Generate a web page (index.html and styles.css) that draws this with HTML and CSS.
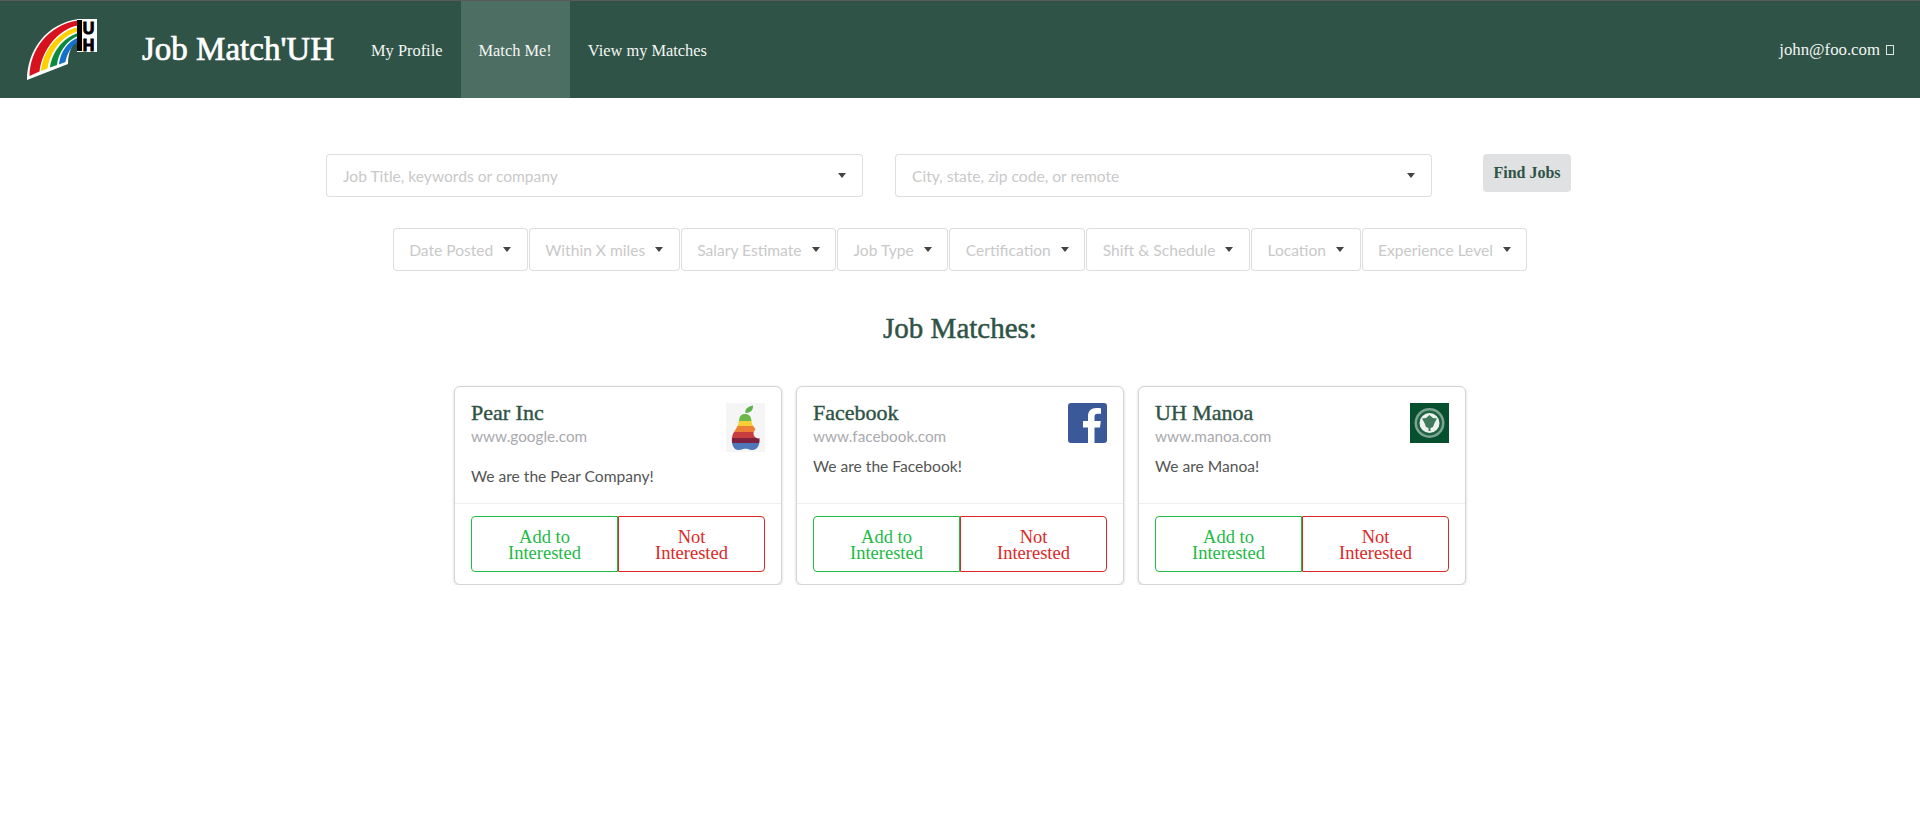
FILE: index.html
```html
<!DOCTYPE html>
<html lang="en">
<head>
<meta charset="utf-8">
<title>Job Match'UH</title>
<link rel="stylesheet" href="styles.css">
</head>
<body>
<nav class="navbar">
  <svg class="logo" viewBox="0 0 100 64" width="100" height="64" aria-hidden="true">
    <path d="M27 61 C27 32 46 4 79 0 L79 20 C72 24 68 34 68 45 Z" fill="#fff"/>
    <path d="M29.500 57 C30 31 48 6 78 1.500 L78 6.500 C58 10 42 31 39.500 52.500 Z" fill="#d5121e"/>
    <path d="M41 52 C43 31 58 13 78 8 L78 12.500 C62 16 50 33 47.500 49.500 Z" fill="#fdd000"/>
    <path d="M50 48.500 C52 33 63 19 78 14 L78 17 C67 21 58 34 57 46 Z" fill="#0a8a3c"/>
    <path d="M59 45.500 C60 34 67 23 78 18.500 L78 23 C72 26 66.500 35 65.500 43 Z" fill="#1470c8"/>
    <rect x="77" y="0" width="20" height="33" fill="#fff"/>
    <rect x="77" y="1" width="5" height="31" fill="#000"/>
    <text class="logo-letter" x="88.500" y="1">UH</text>
  </svg>
  <a class="brand" href="#">Job Match'UH</a>
  <a class="nav-item" href="#">My Profile</a>
  <a class="nav-item active" href="#">Match Me!</a>
  <a class="nav-item" href="#">View my Matches</a>
  <span class="nav-user">john@foo.com <i class="tofu"></i></span>
</nav>

<main class="page">
  <section class="search-row">
    <div class="select select-wide"><span>Job Title, keywords or company</span><i class="caret"></i></div>
    <div class="select select-wide"><span>City, state, zip code, or remote</span><i class="caret"></i></div>
    <button class="find-btn" type="button">Find Jobs</button>
  </section>

  <section class="filter-row">
    <div class="select filter"><span>Date Posted</span><i class="caret"></i></div>
    <div class="select filter"><span>Within X miles</span><i class="caret"></i></div>
    <div class="select filter"><span>Salary Estimate</span><i class="caret"></i></div>
    <div class="select filter"><span>Job Type</span><i class="caret"></i></div>
    <div class="select filter"><span>Certification</span><i class="caret"></i></div>
    <div class="select filter"><span>Shift &amp; Schedule</span><i class="caret"></i></div>
    <div class="select filter"><span>Location</span><i class="caret"></i></div>
    <div class="select filter"><span>Experience Level</span><i class="caret"></i></div>
  </section>

  <h1 class="matches-title">Job Matches:</h1>

  <section class="cards">
    <article class="card">
      <div class="card-body">
        <svg class="card-logo" viewBox="0 0 39 49" width="39" height="49" aria-hidden="true">
          <defs>
            <clipPath id="pear-shape">
              <path d="M19 11 C23 11 25 13 25.500 18 C26 23 30 26 32 30 C34.500 35 34 42 31 45 C28 48 24 47 22 46 C20.500 45.500 18.500 45.500 17 46 C13 47.500 9 47.500 7.500 44 C5 40 5.500 33 8 29 C10.500 25 12.500 22 13 18 C13.500 13 15 11 19 11 Z"/>
            </clipPath>
          </defs>
          <rect width="39" height="49" fill="#f5f5f5"/>
          <path d="M19.500 10 C18.500 6 22 3.500 27 2.500 C27.500 7 24.500 10 19.500 10 Z" fill="#5cb24a"/>
          <g clip-path="url(#pear-shape)">
            <rect x="0" y="10" width="39" height="8" fill="#6cb84b"/>
            <rect x="0" y="18" width="39" height="5" fill="#f8cf36"/>
            <rect x="0" y="23" width="39" height="6" fill="#ee7f36"/>
            <rect x="0" y="29" width="39" height="6" fill="#c73c3c"/>
            <rect x="0" y="35" width="39" height="5" fill="#7e2140"/>
            <rect x="0" y="40" width="39" height="8" fill="#4e76b8"/>
          </g>
          <circle cx="32.500" cy="30.500" r="5" fill="#f5f5f5"/>
        </svg>
        <h2 class="card-title">Pear Inc</h2>
        <div class="card-meta">www.google.com</div>
        <p class="card-desc card-desc-tall">We are the Pear Company!</p>
      </div>
      <div class="card-actions">
        <button class="action action-add" type="button">Add to Interested</button>
        <button class="action action-not" type="button">Not Interested</button>
      </div>
    </article>

    <article class="card">
      <div class="card-body">
        <svg class="card-logo" viewBox="0 0 39 40" width="39" height="40" aria-hidden="true">
          <rect width="39" height="40" rx="3" fill="#3b5998"/>
          <path d="M26.500 40 V24.500 H32 L32.800 18 H26.500 V14 C26.500 12 27.200 10.800 29.800 10.800 H33 V5.200 C32.300 5.100 30.500 5 28.200 5 C23.400 5 20 7.800 20 13.200 V18 H15 V24.500 H20 V40 Z" fill="#fff"/>
        </svg>
        <h2 class="card-title">Facebook</h2>
        <div class="card-meta">www.facebook.com</div>
        <p class="card-desc">We are the Facebook!</p>
      </div>
      <div class="card-actions">
        <button class="action action-add" type="button">Add to Interested</button>
        <button class="action action-not" type="button">Not Interested</button>
      </div>
    </article>

    <article class="card">
      <div class="card-body">
        <svg class="card-logo" viewBox="0 0 39 40" width="39" height="40" aria-hidden="true">
          <rect width="39" height="40" fill="#07502f"/>
          <circle cx="19.500" cy="20" r="15" fill="#7fa391"/>
          <circle cx="19.500" cy="20" r="12.500" fill="#1f6342"/>
          <circle cx="19.500" cy="20" r="10" fill="#eef2ee"/>
          <path d="M19.500 12 L23 15 L27 15.500 L24.500 20 L23 24 L20.500 25 L20.500 28 L18.500 28 L18.500 25 L16 24 L14.500 20 L12 15.500 L16 15 Z" fill="#3f7a5c"/>
        </svg>
        <h2 class="card-title">UH Manoa</h2>
        <div class="card-meta">www.manoa.com</div>
        <p class="card-desc">We are Manoa!</p>
      </div>
      <div class="card-actions">
        <button class="action action-add" type="button">Add to Interested</button>
        <button class="action action-not" type="button">Not Interested</button>
      </div>
    </article>
  </section>
</main>
</body>
</html>
```
FILE: styles.css
```css
* { box-sizing: border-box; }

html, body { margin: 0; padding: 0; background: #fff; }

body {
  font-family: Lato, "Open Sans", sans-serif;
  font-size: 15.6px;
  color: #444;
}

.navbar {
  display: flex;
  align-items: stretch;
  height: 98px;
  background: #2f5346;
  border-top: 1px solid #5a5a5a;
  font-family: "Liberation Serif", serif;
}

.logo { margin-top: 18px; flex: none; align-self: flex-start; overflow: visible; }

.logo-letter {
  font-family: "Liberation Sans", sans-serif;
  font-weight: 700;
  font-size: 16px;
  writing-mode: vertical-rl;
  text-orientation: upright;
  fill: #000;
  stroke: #000;
  stroke-width: 1px;
}

.brand {
  display: flex;
  align-items: center;
  margin-left: 42px;
  margin-right: 19px;
  font-size: 33px;
  color: #fff;
  text-decoration: none;
  white-space: nowrap;
  -webkit-text-stroke: 0.7px #fff;
}

.nav-item {
  display: flex;
  align-items: center;
  padding: 2px 18px 0;
  font-size: 16.4px;
  color: #f3f6f4;
  text-decoration: none;
  white-space: nowrap;
}

.nav-item.active { background: #4d6e62; }

.nav-user {
  display: flex;
  align-items: center;
  gap: 6px;
  margin-left: auto;
  padding-right: 26px;
  font-size: 16.8px;
  color: #f3f6f4;
  white-space: nowrap;
}

.tofu {
  display: inline-block;
  width: 8px;
  height: 10px;
  border: 1px solid #dfe5e2;
}

.page {
  display: flex;
  flex-direction: column;
  align-items: center;
  padding-top: 56px;
}

.search-row {
  display: flex;
  align-items: flex-start;
  width: 1245px;
  margin-left: -23px;
}

.select {
  display: flex;
  align-items: center;
  justify-content: space-between;
  height: 43px;
  background: #fff;
  border: 1px solid rgba(34, 36, 38, 0.15);
  border-radius: 4px;
  color: #c9c9c9;
  white-space: nowrap;
}

.select-wide {
  flex: none;
  width: 537px;
  padding: 0 16px;
}

.select-wide + .select-wide { margin-left: 32px; }

.caret {
  flex: none;
  width: 0;
  height: 0;
  border-left: 4.5px solid transparent;
  border-right: 4.5px solid transparent;
  border-top: 5px solid #444;
}

.find-btn {
  flex: none;
  width: 88px;
  height: 38px;
  margin-left: 51px;
  padding: 0;
  background: #e0e1e2;
  border: 0;
  border-radius: 4px;
  color: #2f5346;
  font-family: "Liberation Serif", serif;
  font-size: 16px;
  font-weight: 700;
}

.filter-row {
  display: flex;
  margin-top: 31px;
  gap: 1px;
}

.filter {
  flex: none;
  gap: 10px;
  padding: 0 15.5px;
}

.matches-title {
  margin: 39px 0 0;
  height: 76px;
  font-family: "Liberation Serif", serif;
  font-size: 29px;
  line-height: 36px;
  font-weight: 400;
  color: #2f5346;
  -webkit-text-stroke: 0.5px #2f5346;
}

.cards {
  display: flex;
  gap: 14px;
}

.card {
  display: flex;
  flex-direction: column;
  width: 328px;
  height: 199px;
  background: #fff;
  border: 1px solid #d4d4d5;
  border-radius: 6px;
  box-shadow: 0 1px 3px 0 #d4d4d5;
}

.card-body {
  height: 117px;
  padding: 16px 16px 0;
  border-bottom: 1px solid #eeeeee;
}

.card-logo { float: right; }

.card-title {
  margin: -2px 0 0;
  font-family: "Liberation Serif", serif;
  font-size: 22px;
  line-height: 24px;
  font-weight: 400;
  color: #2f5346;
  -webkit-text-stroke: 0.4px #2f5346;
}

.card-meta {
  margin-top: 1px;
  font-size: 15.3px;
  line-height: 20px;
  color: #a9a9ae;
}

.card-desc {
  margin: 10px 0 0;
  line-height: 20px;
  color: #555;
}

.card-desc-tall { margin-top: 20px; }

.card-actions {
  display: flex;
  padding: 12px 16px 0;
}

.action {
  flex: 1 1 0;
  height: 56px;
  padding: 2px 30px 0;
  background: #fff;
  font-family: "Liberation Serif", serif;
  font-size: 18.5px;
  line-height: 16px;
}

.action-add {
  color: #21ba45;
  border: 1px solid #21ba45;
  border-radius: 4px 0 0 4px;
}

.action-not {
  color: #db2828;
  border: 1px solid #db2828;
  border-radius: 0 4px 4px 0;
}
```
